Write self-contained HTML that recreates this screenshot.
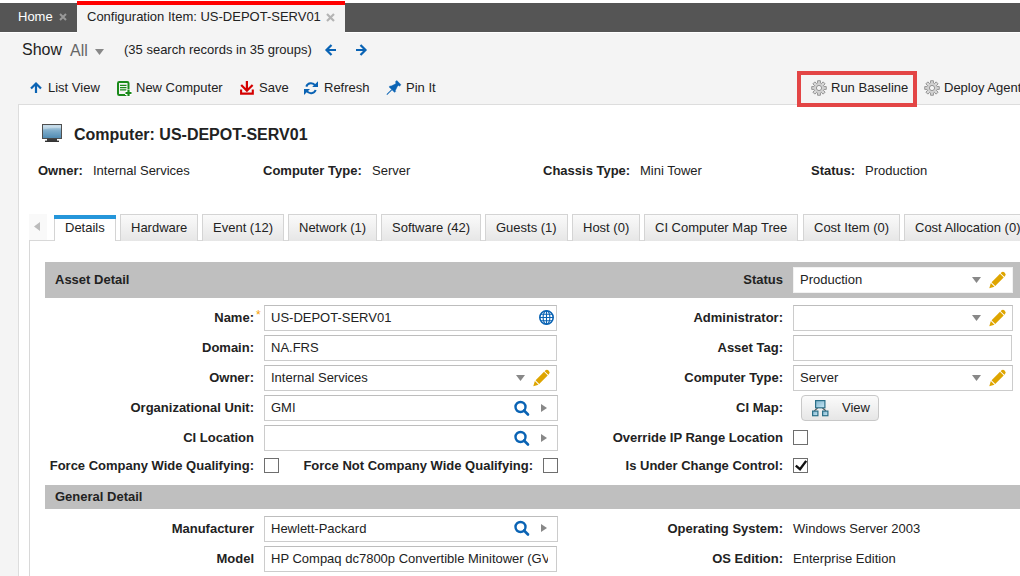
<!DOCTYPE html>
<html><head><meta charset="utf-8">
<style>
*{box-sizing:border-box;margin:0;padding:0}
html,body{width:1020px;height:576px;overflow:hidden}
body{background:#f4f4f4;font-family:"Liberation Sans",sans-serif;font-size:13px;color:#222;position:relative}
.a{position:absolute;white-space:nowrap;line-height:16px}
.b{font-weight:bold}
#topbar{position:absolute;left:0;top:3px;width:1020px;height:29px;background:#555}
#topline{position:absolute;left:0;top:32px;width:1020px;height:1px;background:#fff}
#acttab{position:absolute;left:77px;top:1px;width:268px;height:32px;background:#f4f4f4;border-top:4px solid #f00}
#panel{position:absolute;left:18px;top:104px;width:1010px;height:480px;background:#fff;border-top:1px solid #ddd;border-left:1px solid #ddd}
#tabpanel{position:absolute;left:29px;top:240px;width:1000px;height:400px;border-top:1px solid #d8d8d8;border-left:1px solid #d8d8d8;background:#fff}
.tab{position:absolute;top:214px;height:27px;border:1px solid #d4d4d4;border-bottom:none;background:linear-gradient(#fafafa,#e6e6e6);padding:0 10px;line-height:25px;white-space:nowrap}
.tab.act{top:215px;background:#fff;border-top:4px solid #2596da;border-color:#d4d4d4;border-top-color:#2596da;line-height:17px;height:26px}
.tab.act:before{content:"";position:absolute;left:-1px;right:-1px;top:-4px;height:4px;background:#2596da}
.sec{position:absolute;left:45px;width:990px;background:#bfbfbf}
.inp{position:absolute;background:#fff;border:1px solid #ccc;border-top-color:#bdbdbd;height:26px}
.lbl{position:absolute;white-space:nowrap;line-height:16px;font-weight:bold;text-align:right}
.chk{position:absolute;width:15px;height:15px;border:1px solid #6e6e6e;background:#fff}
svg{position:absolute;overflow:visible}
</style></head><body>
<div style="position:absolute;left:0;top:0;width:1020px;height:3px;background:#fff"></div>
<div id="topbar"></div>
<div id="topline"></div>

<div id="acttab"></div>
<div class="a" style="left:18px;top:9px;color:#fff">Home</div>
<svg style="left:59px;top:13px" width="8" height="8"><path d="M1 1L7 7M7 1L1 7" stroke="#999" stroke-width="2"/></svg>
<div class="a" style="left:87px;top:9px">Configuration Item: US-DEPOT-SERV01</div>
<svg style="left:326px;top:13px" width="9" height="9"><path d="M1 1L8 8M8 1L1 8" stroke="#b4b4b4" stroke-width="2.2"/></svg>

<!-- show row -->
<div class="a" style="left:22px;top:40px;font-size:16px;line-height:19px">Show</div>
<div class="a" style="left:70px;top:41px;font-size:16px;line-height:19px;color:#666">All</div>
<svg style="left:95px;top:49px" width="9" height="6"><path d="M0 0H9L4.5 6Z" fill="#888"/></svg>
<div class="a" style="left:124px;top:42px">(35 search records in 35 groups)</div>
<svg style="left:325px;top:44px" width="12" height="12"><path d="M11 6H1.5M6.5 1L1.5 6L6.5 11" stroke="#0a63b4" stroke-width="2.2" fill="none"/></svg>
<svg style="left:356px;top:44px" width="12" height="12"><path d="M0 6H9.5M4.5 1L9.5 6L4.5 11" stroke="#0a63b4" stroke-width="2.2" fill="none"/></svg>

<!-- toolbar -->
<svg style="left:30px;top:82px" width="12" height="11"><path d="M6 11V1.5M1 6.5L6 1.5L11 6.5" stroke="#0a63b4" stroke-width="2.2" fill="none"/></svg>
<div class="a" style="left:48px;top:80px">List View</div>
<svg style="left:117px;top:81px" width="16" height="16"><rect x="1" y="1" width="10.5" height="13" rx="1.2" stroke="#1a8a1a" stroke-width="2" fill="none"/><path d="M3 4.3H9.5M3 6.6H9.5M3 8.9H9.5" stroke="#1a8a1a" stroke-width="1.3"/><path d="M11.5 8.5V15.5M8 12H15" stroke="#fff" stroke-width="4.2"/><path d="M11.5 9V15M8.5 12H14.5" stroke="#1a8a1a" stroke-width="2.2"/></svg>
<div class="a" style="left:136px;top:80px">New Computer</div>
<svg style="left:240px;top:81px" width="15" height="14"><path d="M6.9 0V10M1.2 4L6.9 9.8L12.6 4" stroke="#d40000" stroke-width="2.2" fill="none"/><path d="M1.1 8.6V12.6H12.8V8.6" stroke="#d40000" stroke-width="2.1" fill="none"/></svg>
<div class="a" style="left:259px;top:80px">Save</div>
<svg style="left:304px;top:81px" width="14" height="14"><path d="M2.3 5.6A5 5 0 0 1 11.3 4.8" stroke="#0a63b4" stroke-width="2" fill="none"/><path d="M14 0.2V6H8.2Z" fill="#0a63b4"/><path d="M11.7 9A5 5 0 0 1 2.7 9.8" stroke="#0a63b4" stroke-width="2" fill="none"/><path d="M0 8H6L0 14Z" fill="#0a63b4"/></svg>
<div class="a" style="left:324px;top:80px">Refresh</div>
<svg style="left:384px;top:78px" width="20" height="20"><g transform="translate(9 10.5) rotate(45) scale(0.89)"><path d="M-3.3 -9.3H3.3V-7H1.8V-5L3.5 0H4.3V1.8H-4.3V0H-3.5L-1.8 -5V-7H-3.3Z" fill="#0a63b4" stroke="#0a63b4" stroke-width="0.6" stroke-linejoin="round"/><rect x="-0.5" y="1.8" width="1" height="8" fill="#0a63b4"/></g></svg>
<div class="a" style="left:406px;top:80px">Pin It</div>

<div style="position:absolute;left:797px;top:71px;width:120px;height:36px;border:4px solid #e34545;z-index:5"></div>
<svg style="left:811px;top:80px" width="16" height="16" viewBox="0 0 16 16"><path d="M13.02 6.65 L15.26 6.59 L15.26 9.41 L13.02 9.35 L12.50 10.60 L14.13 12.14 L12.14 14.13 L10.60 12.50 L9.35 13.02 L9.41 15.26 L6.59 15.26 L6.65 13.02 L5.40 12.50 L3.86 14.13 L1.87 12.14 L3.50 10.60 L2.98 9.35 L0.74 9.41 L0.74 6.59 L2.98 6.65 L3.50 5.40 L1.87 3.86 L3.86 1.87 L5.40 3.50 L6.65 2.98 L6.59 0.74 L9.41 0.74 L9.35 2.98 L10.60 3.50 L12.14 1.87 L14.13 3.86 L12.50 5.40Z" fill="#d9d9d9" stroke="#8a8a8a" stroke-width="0.9" stroke-linejoin="round"/><circle cx="8" cy="8" r="2.6" fill="#f4f4f4" stroke="#8a8a8a" stroke-width="0.9"/><circle cx="8" cy="8" r="4.2" fill="none" stroke="#c4c4c4" stroke-width="0.8"/></svg>
<div class="a" style="left:831px;top:80px">Run Baseline</div>
<svg style="left:924px;top:80px" width="16" height="16" viewBox="0 0 16 16"><path d="M13.02 6.65 L15.26 6.59 L15.26 9.41 L13.02 9.35 L12.50 10.60 L14.13 12.14 L12.14 14.13 L10.60 12.50 L9.35 13.02 L9.41 15.26 L6.59 15.26 L6.65 13.02 L5.40 12.50 L3.86 14.13 L1.87 12.14 L3.50 10.60 L2.98 9.35 L0.74 9.41 L0.74 6.59 L2.98 6.65 L3.50 5.40 L1.87 3.86 L3.86 1.87 L5.40 3.50 L6.65 2.98 L6.59 0.74 L9.41 0.74 L9.35 2.98 L10.60 3.50 L12.14 1.87 L14.13 3.86 L12.50 5.40Z" fill="#d9d9d9" stroke="#8a8a8a" stroke-width="0.9" stroke-linejoin="round"/><circle cx="8" cy="8" r="2.6" fill="#f4f4f4" stroke="#8a8a8a" stroke-width="0.9"/><circle cx="8" cy="8" r="4.2" fill="none" stroke="#c4c4c4" stroke-width="0.8"/></svg>
<div class="a" style="left:944px;top:80px">Deploy Agent</div>

<div id="panel"></div>
<!-- computer header -->
<svg style="left:42px;top:124px" width="20" height="19"><defs><linearGradient id="scr" x1="0" y1="0" x2="0" y2="1"><stop offset="0" stop-color="#cfe2ee"/><stop offset="0.45" stop-color="#7eacca"/><stop offset="1" stop-color="#4e8ab2"/></linearGradient></defs><rect x="0.5" y="0.5" width="19" height="14" fill="url(#scr)" stroke="#505050"/><path d="M1 5.5Q10 3.8 19 4.2V2H1Z" fill="#fff" opacity="0.25"/><rect x="5" y="14.5" width="10" height="2.5" fill="#3c3c3c"/><rect x="3" y="16.6" width="14" height="1.4" fill="#333"/></svg>
<div class="a b" style="left:74px;top:125px;font-size:16px;line-height:19px">Computer: US-DEPOT-SERV01</div>
<div class="a b" style="left:38px;top:163px">Owner:</div>
<div class="a" style="left:93px;top:163px">Internal Services</div>
<div class="a b" style="left:263px;top:163px">Computer Type:</div>
<div class="a" style="left:372px;top:163px">Server</div>
<div class="a b" style="left:543px;top:163px">Chassis Type:</div>
<div class="a" style="left:640px;top:163px">Mini Tower</div>
<div class="a b" style="left:811px;top:163px">Status:</div>
<div class="a" style="left:865px;top:163px">Production</div>

<!-- tabs -->
<div id="tabpanel"></div>
<div style="position:absolute;left:29px;top:214px;width:18px;height:26px;background:#f9f9f9"></div>
<svg style="left:34px;top:222px" width="6" height="9"><path d="M6 0V9L0 4.5Z" fill="#bbb"/></svg>
<div class="tab act" style="left:54px">Details</div>
<div class="tab" style="left:120px">Hardware</div>
<div class="tab" style="left:202px">Event (12)</div>
<div class="tab" style="left:288px">Network (1)</div>
<div class="tab" style="left:381px">Software (42)</div>
<div class="tab" style="left:485px">Guests (1)</div>
<div class="tab" style="left:572px">Host (0)</div>
<div class="tab" style="left:644px">CI Computer Map Tree</div>
<div class="tab" style="left:803px">Cost Item (0)</div>
<div class="tab" style="left:904px">Cost Allocation (0)</div>

<!-- asset detail -->
<div class="sec" style="top:262px;height:36px"></div>
<div class="a b" style="left:55px;top:272px">Asset Detail</div>
<div class="lbl" style="right:237px;top:272px">Status</div>
<div class="inp" style="left:793px;top:267px;width:220px;border-color:#f2f2f2"></div>
<div class="a" style="left:800px;top:272px">Production</div>
<svg style="left:972px;top:277px" width="9" height="6"><path d="M0 0H9L4.5 6Z" fill="#888"/></svg>
<svg style="left:989px;top:272px" width="17" height="17" viewBox="0 0 17 17"><g transform="translate(8.2 8.3) rotate(45)" fill="#dea500"><path d="M-2.6 6.4H2.6L0 11.2Z"/><rect x="-2.6" y="-6.6" width="5.2" height="12"/><path d="M-2.6 -7.5V-8.3A2.6 2.4 0 0 1 2.6 -8.3V-7.5Z"/></g></svg>



<!-- left column -->
<div class="lbl" style="right:766px;top:310px">Name:</div>
<div class="a" style="left:256px;top:307px;color:#f7a000;font-size:12px">*</div>
<div class="inp" style="left:264px;top:305px;width:293px"></div>
<div class="a" style="left:271px;top:310px">US-DEPOT-SERV01</div>
<svg style="left:539px;top:310px" width="15" height="15" viewBox="0 0 15 15"><g fill="none" stroke="#0a63b4"><circle cx="7.5" cy="7.5" r="6.7" stroke-width="1.6"/><ellipse cx="7.5" cy="7.5" rx="3.4" ry="6.7" stroke-width="1.1"/><path d="M7.5 1V14M1 7.5H14M1.8 4.3H13.2M1.8 10.7H13.2" stroke-width="1.1"/></g></svg>

<div class="lbl" style="right:766px;top:340px">Domain:</div>
<div class="inp" style="left:264px;top:335px;width:293px"></div>
<div class="a" style="left:271px;top:340px">NA.FRS</div>

<div class="lbl" style="right:766px;top:370px">Owner:</div>
<div class="inp" style="left:264px;top:365px;width:293px"></div>
<div class="a" style="left:271px;top:370px">Internal Services</div>
<svg class="dd" style="left:516px;top:375px" width="9" height="6"><path d="M0 0H9L4.5 6Z" fill="#888"/></svg>
<svg style="left:533px;top:370px" width="17" height="17" viewBox="0 0 17 17"><g transform="translate(8.2 8.3) rotate(45)" fill="#dea500"><path d="M-2.6 6.4H2.6L0 11.2Z"/><rect x="-2.6" y="-6.6" width="5.2" height="12"/><path d="M-2.6 -7.5V-8.3A2.6 2.4 0 0 1 2.6 -8.3V-7.5Z"/></g></svg>

<div class="lbl" style="right:766px;top:400px">Organizational Unit:</div>
<div class="inp" style="left:264px;top:395px;width:294px"></div>
<div class="a" style="left:271px;top:400px">GMI</div>
<svg style="left:514px;top:401px" width="16" height="15" viewBox="0 0 16 15"><circle cx="6.5" cy="6" r="5" stroke="#0a63b4" stroke-width="2.4" fill="none"/><path d="M10 9.5L14 13.5" stroke="#0a63b4" stroke-width="2.6" stroke-linecap="round"/></svg>
<svg style="left:541px;top:404px" width="6" height="8"><path d="M0 0L6 4L0 8Z" fill="#888"/></svg>

<div class="lbl" style="right:766px;top:430px">CI Location</div>
<div class="inp" style="left:264px;top:425px;width:294px"></div>
<svg style="left:514px;top:431px" width="16" height="15" viewBox="0 0 16 15"><circle cx="6.5" cy="6" r="5" stroke="#0a63b4" stroke-width="2.4" fill="none"/><path d="M10 9.5L14 13.5" stroke="#0a63b4" stroke-width="2.6" stroke-linecap="round"/></svg>
<svg style="left:541px;top:434px" width="6" height="8"><path d="M0 0L6 4L0 8Z" fill="#888"/></svg>

<div class="lbl" style="right:766px;top:458px">Force Company Wide Qualifying:</div>
<div class="chk" style="left:264px;top:458px"></div>
<div class="lbl" style="right:487px;top:458px">Force Not Company Wide Qualifying:</div>
<div class="chk" style="left:543px;top:458px"></div>

<!-- right column -->
<div class="lbl" style="right:237px;top:310px">Administrator:</div>
<div class="inp" style="left:793px;top:305px;width:220px"></div>
<svg style="left:972px;top:315px" width="9" height="6"><path d="M0 0H9L4.5 6Z" fill="#888"/></svg>
<svg style="left:989px;top:310px" width="17" height="17" viewBox="0 0 17 17"><g transform="translate(8.2 8.3) rotate(45)" fill="#dea500"><path d="M-2.6 6.4H2.6L0 11.2Z"/><rect x="-2.6" y="-6.6" width="5.2" height="12"/><path d="M-2.6 -7.5V-8.3A2.6 2.4 0 0 1 2.6 -8.3V-7.5Z"/></g></svg>

<div class="lbl" style="right:237px;top:340px">Asset Tag:</div>
<div class="inp" style="left:793px;top:335px;width:219px"></div>

<div class="lbl" style="right:237px;top:370px">Computer Type:</div>
<div class="inp" style="left:793px;top:365px;width:220px"></div>
<div class="a" style="left:800px;top:370px">Server</div>
<svg style="left:972px;top:375px" width="9" height="6"><path d="M0 0H9L4.5 6Z" fill="#888"/></svg>
<svg style="left:989px;top:370px" width="17" height="17" viewBox="0 0 17 17"><g transform="translate(8.2 8.3) rotate(45)" fill="#dea500"><path d="M-2.6 6.4H2.6L0 11.2Z"/><rect x="-2.6" y="-6.6" width="5.2" height="12"/><path d="M-2.6 -7.5V-8.3A2.6 2.4 0 0 1 2.6 -8.3V-7.5Z"/></g></svg>

<div class="lbl" style="right:237px;top:400px">CI Map:</div>
<div style="position:absolute;left:801px;top:395px;width:78px;height:26px;border:1px solid #c8c8c8;border-radius:4px;background:linear-gradient(#fbfbfb,#e6e6e6)"></div>
<svg style="left:812px;top:400px" width="17" height="17" viewBox="0 0 17 17"><defs><linearGradient id="cg" x1="0" y1="0" x2="1" y2="1"><stop offset="0" stop-color="#7fb3cc"/><stop offset="1" stop-color="#c8e8f6"/></linearGradient></defs><path d="M5.6 8L2.3 10.8M10.4 8L13.9 10.8" stroke="#555" stroke-width="1.1"/><rect x="3.6" y="0.6" width="9.3" height="7.2" fill="url(#cg)" stroke="#2b6f88" stroke-width="1.2"/><rect x="0.6" y="11.1" width="5.3" height="4.6" fill="url(#cg)" stroke="#2b6f88" stroke-width="1.2"/><rect x="10.6" y="11.1" width="5.3" height="4.6" fill="url(#cg)" stroke="#2b6f88" stroke-width="1.2"/></svg>
<div class="a" style="left:842px;top:400px">View</div>

<div class="lbl" style="right:237px;top:430px">Override IP Range Location</div>
<div class="chk" style="left:793px;top:430px"></div>
<div class="lbl" style="right:237px;top:458px">Is Under Change Control:</div>
<div class="chk" style="left:793px;top:458px"></div>
<svg style="left:795px;top:460px" width="12" height="12"><path d="M0.8 5.6L5 9.2L11.2 0.9" stroke="#111" stroke-width="2.4" fill="none"/></svg>

<!-- general detail -->
<div class="sec" style="top:485px;height:24px"></div>
<div class="a b" style="left:55px;top:489px">General Detail</div>
<div class="lbl" style="right:766px;top:521px">Manufacturer</div>
<div class="inp" style="left:264px;top:516px;width:294px;height:26px"></div>
<div class="a" style="left:271px;top:521px">Hewlett-Packard</div>
<svg style="left:514px;top:521px" width="16" height="15" viewBox="0 0 16 15"><circle cx="6.5" cy="6" r="5" stroke="#0a63b4" stroke-width="2.4" fill="none"/><path d="M10 9.5L14 13.5" stroke="#0a63b4" stroke-width="2.6" stroke-linecap="round"/></svg>
<svg style="left:541px;top:524px" width="6" height="8"><path d="M0 0L6 4L0 8Z" fill="#888"/></svg>
<div class="lbl" style="right:766px;top:551px">Model</div>
<div class="inp" style="left:264px;top:546px;width:293px;height:26px"></div><div class="a" style="left:271px;top:551px;width:277px;overflow:hidden">HP Compaq dc7800p Convertible Minitower (GV</div>
<div class="lbl" style="right:237px;top:521px">Operating System:</div>
<div class="a" style="left:793px;top:521px">Windows Server 2003</div>
<div class="lbl" style="right:237px;top:551px">OS Edition:</div>
<div class="a" style="left:793px;top:551px">Enterprise Edition</div>
</body></html>
